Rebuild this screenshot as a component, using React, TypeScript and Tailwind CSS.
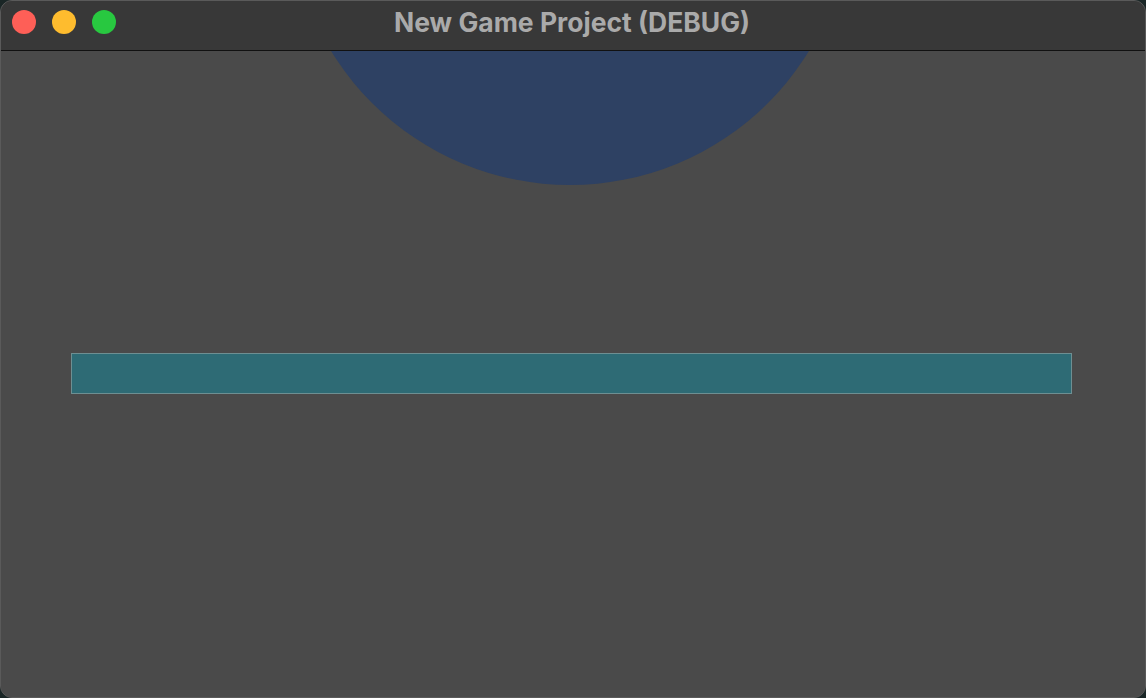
import React from "react";

export default function App() {
  return (
    <div className="w-[1146px] h-[698px] bg-[#1a2626] overflow-hidden">
      <div className="w-full h-full rounded-[12px] overflow-hidden flex flex-col border border-[#5a5a5a] bg-[#4a4a4a]">
        <div className="relative h-[50px] shrink-0 bg-[#383838] flex items-center justify-center border-b border-[#111111]">
          <div className="absolute left-[11px] top-[9px] flex gap-[16px]">
            <div className="w-[24px] h-[24px] rounded-full bg-[#fe5f57]" />
            <div className="w-[24px] h-[24px] rounded-full bg-[#febc2e]" />
            <div className="w-[24px] h-[24px] rounded-full bg-[#28c840]" />
          </div>
          <span
            className="text-[26.5px] font-bold text-[#aaaaaa] mt-[-5px] ml-[-2px]"
            style={{ fontFamily: "Inter, 'Liberation Sans', sans-serif" }}
          >
            New Game Project (DEBUG)
          </span>
        </div>
        <div className="relative flex-1 bg-[#4a4a4a]">
          <svg className="absolute left-0 top-0" width="1146" height="200">
            <circle cx="569" cy="-146" r="280" fill="#2e4163" />
          </svg>
          <div className="absolute left-[70px] top-[302px] w-[1001px] h-[41px] bg-[#2e6b75] border border-[#6e8f92]" />
        </div>
      </div>
    </div>
  );
}
